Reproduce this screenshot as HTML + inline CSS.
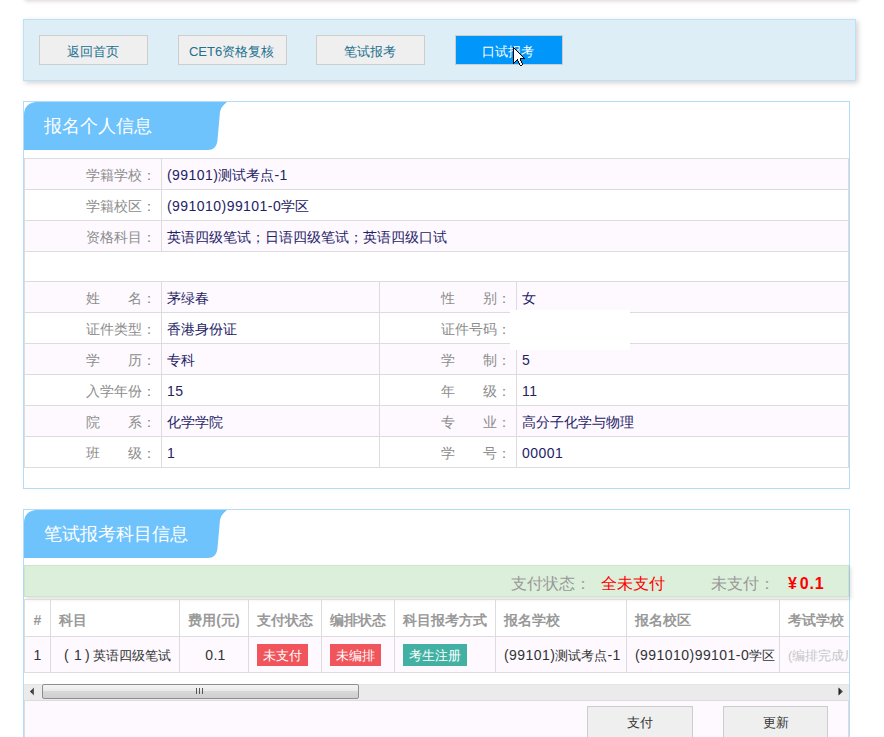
<!DOCTYPE html>
<html><head><meta charset="utf-8">
<style>
*{margin:0;padding:0;box-sizing:border-box;}
html,body{width:884px;height:737px;overflow:hidden;background:#fff;font-family:"Liberation Sans",sans-serif;font-size:14px;}
.abs{position:absolute;}
#topshadow{position:absolute;left:23px;top:-40px;width:833px;height:40px;background:#fff;box-shadow:2px 1px 4px rgba(80,40,60,0.22);}
#toolbar{position:absolute;left:23px;top:19px;width:833px;height:62px;background:#deeef7;border:1px solid #b8e2f5;box-shadow:2px 2px 5px rgba(80,40,60,0.22);}
.btn{position:absolute;top:35px;height:30px;width:109px;background:#efefef;border:1px solid #cdcdcd;color:#21708f;font-size:13px;line-height:28px;text-align:center;padding-top:2px;padding-right:2px;}
.btn.on{background:#0096fa;color:#fff;}
.panel{position:absolute;left:23px;width:827px;border:1px solid #b3dcf8;background:#fff;}
.tab{position:absolute;left:0;top:0;}
.tabtxt{position:absolute;left:20px;top:0;height:48px;line-height:48px;color:#fff;font-size:18px;}
.hl{position:absolute;height:1px;background:#dcdcdc;}
.vl{position:absolute;width:1px;background:#dcdcdc;}
.row{position:absolute;left:24px;width:825px;height:30px;}
.pk{background:#fdf9fe;}
.lbl{position:absolute;color:#8c8c8c;text-align:right;line-height:30px;font-size:14px;padding-top:1px;}
.val{position:absolute;color:#1e2266;line-height:30px;font-size:14px;white-space:nowrap;padding-top:1px;}
.th{position:absolute;top:602px;height:36px;line-height:36px;font-size:14px;font-weight:bold;color:#999;white-space:nowrap;}
.td{position:absolute;top:638px;height:35px;line-height:35px;font-size:13px;color:#333;white-space:nowrap;}
.badge{position:absolute;top:644px;height:22px;line-height:22px;font-size:13px;padding-top:1px;color:#fff;text-align:center;}
.btn2{position:absolute;top:706px;width:106px;height:36px;background:#efefef;border:1px solid #cdcdcd;color:#333;font-size:13px;line-height:32px;text-align:center;}
.l{font-size:14px;letter-spacing:0.45px;}
</style></head><body>
<div id="topshadow"></div>
<div id="toolbar"></div>
<div class="btn" style="left:39px;">返回首页</div>
<div class="btn" style="left:178px;">CET6资格复核</div>
<div class="btn" style="left:316px;">笔试报考</div>
<div class="btn on" style="left:455px;width:108px;">口试报考</div>

<!-- panel 1 -->
<div class="panel" style="top:101px;height:388px;">
  <svg class="tab" width="210" height="48" viewBox="0 0 210 48"><path d="M0,13 C0,5 5,0 13,0 L203,0 C199,3 196,7 195.8,12 L193.5,38 C193,45 189,48 184,48 L0,48 Z" fill="#6ec3fc"/></svg>
  <div class="tabtxt">报名个人信息</div>
</div>
<!-- table 1 rows -->
<div class="row pk" style="top:159px;"></div>
<div class="row" style="top:190px;"></div>
<div class="row pk" style="top:221px;"></div>
<div class="row" style="top:252px;height:29px;"></div>
<div class="row pk" style="top:282px;"></div>
<div class="row" style="top:313px;"></div>
<div class="row pk" style="top:344px;"></div>
<div class="row" style="top:375px;"></div>
<div class="row pk" style="top:406px;"></div>
<div class="row" style="top:437px;"></div>
<!-- horizontal lines -->
<div class="hl" style="left:24px;width:825px;top:158px;"></div>
<div class="hl" style="left:24px;width:825px;top:189px;"></div>
<div class="hl" style="left:24px;width:825px;top:220px;"></div>
<div class="hl" style="left:24px;width:825px;top:251px;"></div>
<div class="hl" style="left:24px;width:825px;top:281px;"></div>
<div class="hl" style="left:24px;width:825px;top:312px;"></div>
<div class="hl" style="left:24px;width:825px;top:343px;"></div>
<div class="hl" style="left:24px;width:825px;top:374px;"></div>
<div class="hl" style="left:24px;width:825px;top:405px;"></div>
<div class="hl" style="left:24px;width:825px;top:436px;"></div>
<div class="hl" style="left:24px;width:825px;top:467px;"></div>
<div class="vl" style="left:24px;top:158px;height:310px;"></div>
<div class="vl" style="left:848px;top:158px;height:310px;"></div>
<div class="vl" style="left:161px;top:158px;height:94px;"></div>
<div class="vl" style="left:161px;top:281px;height:187px;"></div>
<div class="vl" style="left:379px;top:281px;height:187px;"></div>
<div class="vl" style="left:516px;top:281px;height:187px;"></div>

<!-- labels / values table1 -->
<div class="lbl" style="left:30px;width:126px;top:159px;">学籍学校：</div>
<div class="val" style="left:167px;top:159px;"><span class="l">(99101)</span>测试考点<span class="l">-1</span></div>
<div class="lbl" style="left:30px;width:126px;top:190px;">学籍校区：</div>
<div class="val" style="left:167px;top:190px;"><span class="l">(991010)99101-0</span>学区</div>
<div class="lbl" style="left:30px;width:126px;top:221px;">资格科目：</div>
<div class="val" style="left:167px;top:221px;">英语四级笔试；日语四级笔试；英语四级口试</div>

<div class="lbl" style="left:30px;width:126px;top:282px;">姓　　名：</div>
<div class="val" style="left:167px;top:282px;">茅绿春</div>
<div class="lbl" style="left:385px;width:126px;top:282px;">性　　别：</div>
<div class="val" style="left:522px;top:282px;">女</div>
<div class="lbl" style="left:30px;width:126px;top:313px;">证件类型：</div>
<div class="val" style="left:167px;top:313px;">香港身份证</div>
<div class="lbl" style="left:385px;width:126px;top:313px;">证件号码：</div>

<div class="lbl" style="left:30px;width:126px;top:344px;">学　　历：</div>
<div class="val" style="left:167px;top:344px;">专科</div>
<div class="lbl" style="left:385px;width:126px;top:344px;">学　　制：</div>
<div class="val" style="left:522px;top:344px;"><span class="l">5</span></div>
<div class="lbl" style="left:30px;width:126px;top:375px;">入学年份：</div>
<div class="val" style="left:167px;top:375px;"><span class="l">15</span></div>
<div class="lbl" style="left:385px;width:126px;top:375px;">年　　级：</div>
<div class="val" style="left:522px;top:375px;"><span class="l">11</span></div>
<div class="lbl" style="left:30px;width:126px;top:406px;">院　　系：</div>
<div class="val" style="left:167px;top:406px;">化学学院</div>
<div class="lbl" style="left:385px;width:126px;top:406px;">专　　业：</div>
<div class="val" style="left:522px;top:406px;">高分子化学与物理</div>
<div class="lbl" style="left:30px;width:126px;top:437px;">班　　级：</div>
<div class="val" style="left:167px;top:437px;"><span class="l">1</span></div>
<div class="lbl" style="left:385px;width:126px;top:437px;">学　　号：</div>
<div class="val" style="left:522px;top:437px;"><span class="l">00001</span></div>

<div class="abs" style="left:510px;top:310px;width:120px;height:40px;background:#fff;"></div>
<!-- panel 2 -->
<div class="panel" style="top:509px;height:260px;">
  <svg class="tab" width="210" height="48" viewBox="0 0 210 48"><path d="M0,13 C0,5 5,0 13,0 L203,0 C199,3 196,7 195.8,12 L193.5,38 C193,45 189,48 184,48 L0,48 Z" fill="#6ec3fc"/></svg>
  <div class="tabtxt">笔试报考科目信息</div>
</div>


<!-- green bar -->
<div class="abs" style="left:24px;top:565px;width:825px;height:32px;background:#dcefdb;border:1px solid #cfe5c8;box-shadow:2px 2px 4px rgba(0,0,0,0.13);"></div>
<div class="abs" style="left:511px;top:568px;height:32px;line-height:32px;font-size:16px;color:#999;white-space:nowrap;">支付状态：</div>
<div class="abs" style="left:601px;top:568px;height:32px;line-height:32px;font-size:16px;color:#f00;white-space:nowrap;">全未支付</div>
<div class="abs" style="left:711px;top:568px;height:32px;line-height:32px;font-size:16px;color:#999;white-space:nowrap;">未支付：</div>
<div class="abs" style="left:788px;top:568px;height:32px;line-height:32px;font-size:16px;color:#f00;font-weight:bold;white-space:nowrap;letter-spacing:0.8px;"><span style="margin-right:2px">¥</span>0.1</div>
<!-- table 2 -->
<div class="row" style="top:600px;height:36px;"></div>
<div class="row pk" style="top:637px;height:35px;"></div>
<div class="hl" style="left:24px;width:825px;top:599px;"></div>
<div class="hl" style="left:24px;width:825px;top:636px;"></div>
<div class="hl" style="left:24px;width:825px;top:672px;"></div>
<div class="vl" style="left:24px;top:599px;height:74px;"></div>
<div class="vl" style="left:50px;top:599px;height:74px;"></div>
<div class="vl" style="left:179px;top:599px;height:74px;"></div>
<div class="vl" style="left:248px;top:599px;height:74px;"></div>
<div class="vl" style="left:321px;top:599px;height:74px;"></div>
<div class="vl" style="left:394px;top:599px;height:74px;"></div>
<div class="vl" style="left:495px;top:599px;height:74px;"></div>
<div class="vl" style="left:626px;top:599px;height:74px;"></div>
<div class="vl" style="left:779px;top:599px;height:74px;"></div>
<div class="th" style="left:25px;width:25px;text-align:center;">#</div>
<div class="th" style="left:59px;">科目</div>
<div class="th" style="left:180px;width:68px;text-align:center;">费用(元)</div>
<div class="th" style="left:249px;width:72px;text-align:center;">支付状态</div>
<div class="th" style="left:322px;width:72px;text-align:center;">编排状态</div>
<div class="th" style="left:395px;width:100px;text-align:center;">科目报考方式</div>
<div class="th" style="left:504px;">报名学校</div>
<div class="th" style="left:635px;">报名校区</div>
<div class="th" style="left:788px;">考试学校</div>
<div class="td" style="left:25px;width:25px;text-align:center;"><span class="l">1</span></div>
<div class="td" style="left:64px;"><span class="l">(</span></div><div class="td" style="left:74px;"><span class="l">1</span></div><div class="td" style="left:85px;"><span class="l">)</span></div><div class="td" style="left:93px;">英语四级笔试</div>
<div class="td" style="left:180px;width:68px;text-align:center;"><span class="l" style="letter-spacing:0.3px;margin-left:3px">0.1</span></div>
<div class="badge" style="left:257px;width:51px;background:#f0555c;">未支付</div>
<div class="badge" style="left:330px;width:51px;background:#f0555c;">未编排</div>
<div class="badge" style="left:403px;width:64px;background:#42b1a4;">考生注册</div>
<div class="td" style="left:504px;"><span class="l">(99101)</span>测试考点<span class="l">-1</span></div>
<div class="td" style="left:635px;"><span class="l">(991010)99101-0</span>学区</div>
<div class="td" style="left:788px;width:60px;overflow:hidden;color:#c6c6c6;">(编排完成后</div>
<!-- scrollbar -->
<div class="abs" style="left:24px;top:684px;width:825px;height:16px;background:#ebebeb;border-top:1px solid #e4e4e4;"></div><div class="hl" style="left:24px;width:825px;top:700px;"></div>
<svg class="abs" style="left:29px;top:687px;" width="6" height="9" viewBox="0 0 6 9"><defs><linearGradient id="ga" x1="0" x2="1" y1="0" y2="0"><stop offset="0" stop-color="#111"/><stop offset="1" stop-color="#666"/></linearGradient></defs><path d="M1,4.5 L5,0.5 L5,8.5 Z" fill="url(#ga)"/></svg>
<svg class="abs" style="left:838px;top:687px;" width="6" height="9" viewBox="0 0 6 9"><defs><linearGradient id="gb" x1="0" x2="1" y1="0" y2="0"><stop offset="0" stop-color="#111"/><stop offset="1" stop-color="#666"/></linearGradient></defs><path d="M0.5,0.5 L5,4.5 L0.5,8.5 Z" fill="url(#gb)"/></svg>
<div class="abs" style="left:42px;top:684px;width:317px;height:15px;border:1px solid #8e8e8e;border-radius:2px;background:linear-gradient(#f4f4f4 0%,#eaeaea 45%,#d8d8d8 50%,#cfcfcf 100%);"></div>
<div class="abs" style="left:196px;top:688px;width:7px;height:6px;border-left:1px solid #555;border-right:1px solid #555;"></div>
<div class="abs" style="left:199px;top:688px;width:1px;height:6px;background:#555;"></div>
<!-- bottom area -->
<div class="abs pk" style="left:24px;top:701px;width:825px;height:40px;"></div>
<div class="btn2" style="left:587px;">支付</div>
<div class="btn2" style="left:723px;width:105px;">更新</div>
<div class="vl" style="left:24px;top:701px;height:40px;"></div>
<div class="vl" style="left:848px;top:701px;height:40px;"></div>
<!-- cursor -->
<svg class="abs" style="left:513px;top:47px;" width="12" height="19" viewBox="0 0 12 19" shape-rendering="crispEdges"><path d="M1,2h1v1h-1zM1,3h1v1h-1zM2,3h1v1h-1zM1,4h1v1h-1zM2,4h1v1h-1zM3,4h1v1h-1zM1,5h1v1h-1zM2,5h1v1h-1zM3,5h1v1h-1zM4,5h1v1h-1zM1,6h1v1h-1zM2,6h1v1h-1zM3,6h1v1h-1zM4,6h1v1h-1zM5,6h1v1h-1zM1,7h1v1h-1zM2,7h1v1h-1zM3,7h1v1h-1zM4,7h1v1h-1zM5,7h1v1h-1zM6,7h1v1h-1zM1,8h1v1h-1zM2,8h1v1h-1zM3,8h1v1h-1zM4,8h1v1h-1zM5,8h1v1h-1zM6,8h1v1h-1zM7,8h1v1h-1zM1,9h1v1h-1zM2,9h1v1h-1zM3,9h1v1h-1zM4,9h1v1h-1zM5,9h1v1h-1zM6,9h1v1h-1zM7,9h1v1h-1zM8,9h1v1h-1zM1,10h1v1h-1zM2,10h1v1h-1zM3,10h1v1h-1zM4,10h1v1h-1zM5,10h1v1h-1zM6,10h1v1h-1zM7,10h1v1h-1zM8,10h1v1h-1zM9,10h1v1h-1zM1,11h1v1h-1zM2,11h1v1h-1zM3,11h1v1h-1zM4,11h1v1h-1zM5,11h1v1h-1zM6,11h1v1h-1zM1,12h1v1h-1zM2,12h1v1h-1zM3,12h1v1h-1zM5,12h1v1h-1zM6,12h1v1h-1zM1,13h1v1h-1zM2,13h1v1h-1zM5,13h1v1h-1zM6,13h1v1h-1zM1,14h1v1h-1zM6,14h1v1h-1zM7,14h1v1h-1zM6,15h1v1h-1zM7,15h1v1h-1zM7,16h1v1h-1zM8,16h1v1h-1zM7,17h1v1h-1zM8,17h1v1h-1z" fill="#fff"/><path d="M0,0h1v1h-1zM0,1h1v1h-1zM1,1h1v1h-1zM0,2h1v1h-1zM2,2h1v1h-1zM0,3h1v1h-1zM3,3h1v1h-1zM0,4h1v1h-1zM4,4h1v1h-1zM0,5h1v1h-1zM5,5h1v1h-1zM0,6h1v1h-1zM6,6h1v1h-1zM0,7h1v1h-1zM7,7h1v1h-1zM0,8h1v1h-1zM8,8h1v1h-1zM0,9h1v1h-1zM9,9h1v1h-1zM0,10h1v1h-1zM10,10h1v1h-1zM0,11h1v1h-1zM7,11h1v1h-1zM8,11h1v1h-1zM9,11h1v1h-1zM10,11h1v1h-1zM11,11h1v1h-1zM0,12h1v1h-1zM4,12h1v1h-1zM7,12h1v1h-1zM0,13h1v1h-1zM3,13h1v1h-1zM4,13h1v1h-1zM7,13h1v1h-1zM0,14h1v1h-1zM2,14h1v1h-1zM5,14h1v1h-1zM8,14h1v1h-1zM0,15h1v1h-1zM1,15h1v1h-1zM5,15h1v1h-1zM8,15h1v1h-1zM0,16h1v1h-1zM6,16h1v1h-1zM9,16h1v1h-1zM6,17h1v1h-1zM9,17h1v1h-1zM7,18h1v1h-1zM8,18h1v1h-1z" fill="#000"/></svg>
</body></html>
